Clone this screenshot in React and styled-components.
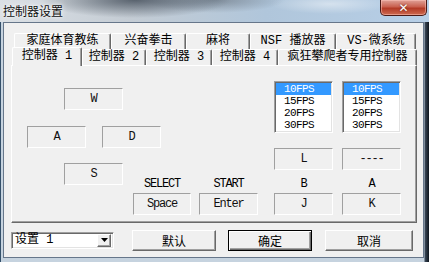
import React from "react";
import styled, { createGlobalStyle } from "styled-components";

const GlobalStyle = createGlobalStyle`
  html, body { margin: 0; padding: 0; width: 429px; height: 262px; overflow: hidden; }
  body { font-family: "Liberation Mono", "Noto Sans CJK SC", monospace; font-size: 12px; color: #000; }
  * { box-sizing: border-box; }
`;

const Window = styled.div`
  width: 429px;
  height: 262px;
  display: flex;
  flex-direction: column;
  background: #c3d1de;
`;

const TitleBar = styled.div`
  height: 22px;
  flex: none;
  display: flex;
  justify-content: space-between;
  align-items: flex-start;
  background:
    radial-gradient(ellipse 95px 18px at 135px 0px, rgba(62, 72, 84, 0.8), rgba(62, 72, 84, 0) 100%),
    radial-gradient(ellipse 70px 13px at 215px 0px, rgba(85, 96, 108, 0.55), rgba(85, 96, 108, 0) 100%),
    radial-gradient(ellipse 60px 10px at 330px 4px, rgba(255, 255, 255, 0.45), rgba(255, 255, 255, 0) 100%),
    linear-gradient(to right, #dbe0e5 0%, #c4ccd4 30%, #b0c6db 62%, #b7cfe7 100%);
`;

const Title = styled.div`
  padding-left: 3px;
  line-height: 22px;
  font-family: "Noto Sans CJK SC", sans-serif;
  font-size: 12px;
  color: #101010;
  text-shadow: 0 0 6px rgba(255, 255, 255, 0.95), 0 0 3px rgba(255, 255, 255, 0.8);
`;

const CloseButton = styled.div`
  width: 47px;
  height: 16px;
  margin-right: 2px;
  border: 1px solid #4a1a16;
  border-top: none;
  border-radius: 0 0 5px 5px;
  background: linear-gradient(to bottom, #e0a298 0%, #c9604f 45%, #b33a26 55%, #cd6a50 100%);
  box-shadow: inset 0 0 0 1px rgba(255, 200, 190, 0.5);
  display: flex;
  align-items: center;
  justify-content: center;
  color: #fff;
  font-family: "DejaVu Sans", sans-serif;
  font-weight: bold;
  font-size: 12px;
  line-height: 1;
  text-shadow: 0 0 2px #5a1a10;
`;

const BodyRow = styled.div`
  flex: 1;
  display: flex;
  padding: 0 5px 4px 3px;
  background: linear-gradient(
    to right,
    #34506a 0px,
    #34506a 1px,
    #c6d3df 1px,
    #c6d3df 424px,
    #3a4858 425px,
    #0e151d 429px
  );
`;

const Client = styled.div`
  flex: 1;
  border: 1px solid #66768a;
  background: #f0f0f0;
  display: flex;
  flex-direction: column;
`;

const TabArea = styled.div`
  margin: 10px 0 0 7px;
  width: 406px;
  display: flex;
  flex-direction: column;
`;

const TabRow = styled.div`
  height: 16px;
  display: flex;
  align-items: flex-end;
  padding-left: ${(p) => p.$indent}px;
`;

const Tab = styled.div`
  width: ${(p) => p.$w}px;
  height: ${(p) => (p.$active ? 19 : 16)}px;
  margin-bottom: ${(p) => (p.$active ? -1 : 0)}px;
  position: ${(p) => (p.$active ? "relative" : "static")};
  z-index: ${(p) => (p.$active ? 1 : "auto")};
  background: #f0f0f0;
  border-top: 1px solid #fff;
  border-left: 1px solid #fff;
  border-right: 1px solid #696969;
  border-radius: 2px 2px 0 0;
  box-shadow: inset -1px 0 0 #a0a0a0;
  text-align: center;
  line-height: 14px;
  padding-top: ${(p) => (p.$active ? 1 : 0)}px;
  white-space: nowrap;
  font-size: 12px;
`;

const Panel = styled.div`
  width: 406px;
  height: 158px;
  background: #f0f0f0;
  border-top: 1px solid #fff;
  border-left: 1px solid #fff;
  border-right: 1px solid #696969;
  border-bottom: 1px solid #696969;
  box-shadow: inset -1px -1px 0 #a0a0a0;
  padding: 15px 0 0 15px;
  display: grid;
  grid-template-columns:
    [a] 37px [w] 22px [ae] 16px [d] 21px [we] 10px [sp] 28px [de] 30px [spe] 8px
    [en] 59px [ene] 16px [l] 59px [le] 9px [r] 59px [re];
  grid-template-rows:
    [lt] 7px [wt] 22px [wb] 16px [at] 7px [lb] 15px [ab] 15px [st] 7px [lbot] 9px
    [labt] 6px [sb] 8px [bt] 22px [bb];
`;

const latin = `
  font-family: "Liberation Mono", monospace;
  font-size: 12px;
  letter-spacing: -1.2px;
`;

const KeyBox = styled.div`
  grid-column: ${(p) => p.$col};
  grid-row: ${(p) => p.$row};
  border-top: 1px solid #a0a0a0;
  border-left: 1px solid #a0a0a0;
  border-right: 1px solid #fff;
  border-bottom: 1px solid #fff;
  display: flex;
  align-items: center;
  justify-content: center;
  ${latin}
  color: #111;
`;

const KeyLabel = styled.div`
  grid-column: ${(p) => p.$col};
  grid-row: labt / bt;
  text-align: center;
  line-height: 11px;
  ${latin}
`;

const ListBox = styled.div`
  grid-column: ${(p) => p.$col};
  grid-row: lt / lb;
  background: #fff;
  border: 1px solid;
  border-color: #a0a0a0 #fff #fff #a0a0a0;
  box-shadow: inset 1px 1px 0 #696969, inset -1px -1px 0 #e3e3e3;
  padding: 1px;
  display: flex;
  flex-direction: column;
`;

const ListItem = styled.div`
  height: 12px;
  line-height: 12px;
  padding-left: 8px;
  font-family: "Liberation Mono", monospace;
  font-size: 11px;
  letter-spacing: -0.6px;
  background: ${(p) => (p.$selected ? "#3399ff" : "transparent")};
  color: ${(p) => (p.$selected ? "#fff" : "#000")};
`;

const BottomBar = styled.div`
  flex: 1;
  display: flex;
  align-items: center;
  padding-left: 7px;
`;

const Combo = styled.div`
  width: 103px;
  height: 17px;
  background: #fff;
  border: 1px solid;
  border-color: #a0a0a0 #fff #fff #a0a0a0;
  box-shadow: inset 1px 1px 0 #696969, inset -1px -1px 0 #e3e3e3;
  padding: 2px;
  display: flex;
  align-items: center;
  justify-content: space-between;
`;

const ComboText = styled.span`
  padding-left: 1px;
  font-size: 12px;
  line-height: 13px;
`;

const ComboArrow = styled.div`
  width: 14px;
  height: 13px;
  background: #f0f0f0;
  border: 1px solid;
  border-color: #fff #696969 #696969 #fff;
  box-shadow: inset -1px -1px 0 #a0a0a0;
  display: flex;
  align-items: center;
  justify-content: center;
`;

const Button = styled.div`
  width: ${(p) => p.$w}px;
  height: 21px;
  margin-left: ${(p) => p.$ml}px;
  background: #f0f0f0;
  border: 1px solid;
  border-color: ${(p) => (p.$default ? "#000" : "#fff #696969 #696969 #fff")};
  box-shadow: ${(p) =>
    p.$default
      ? "inset 1px 1px 0 #fff, inset -1px -1px 0 #696969, inset -2px -2px 0 #a0a0a0"
      : "inset -1px -1px 0 #a0a0a0"};
  display: flex;
  align-items: center;
  justify-content: center;
  font-family: "Noto Sans CJK SC", sans-serif;
  font-size: 12px;
`;

const backTabs = [
  { label: "家庭体育教练", w: 97 },
  { label: "兴奋拳击", w: 75 },
  { label: "麻将", w: 64 },
  { label: "NSF 播放器", w: 86 },
  { label: "VS-微系统", w: 80 },
];

const frontTabs = [
  { label: "控制器 1", w: 70, active: true },
  { label: "控制器 2", w: 64 },
  { label: "控制器 3", w: 66 },
  { label: "控制器 4", w: 66 },
  { label: "疯狂攀爬者专用控制器", w: 139 },
];

const fps = ["10FPS", "15FPS", "20FPS", "30FPS"];

export default function App() {
  return (
    <>
      <GlobalStyle />
      <Window>
        <TitleBar>
          <Title>控制器设置</Title>
          <CloseButton>✕</CloseButton>
        </TitleBar>
        <BodyRow>
          <Client>
            <TabArea>
              <TabRow $indent={3}>
                {backTabs.map((t) => (
                  <Tab key={t.label} $w={t.w}>
                    {t.label}
                  </Tab>
                ))}
              </TabRow>
              <TabRow $indent={1}>
                {frontTabs.map((t) => (
                  <Tab key={t.label} $w={t.w} $active={t.active}>
                    {t.label}
                  </Tab>
                ))}
              </TabRow>
              <Panel>
                <KeyBox $col="w / we" $row="wt / wb">W</KeyBox>
                <KeyBox $col="a / ae" $row="at / ab">A</KeyBox>
                <KeyBox $col="d / de" $row="at / ab">D</KeyBox>
                <KeyBox $col="w / we" $row="st / sb">S</KeyBox>

                <ListBox $col="l / le">
                  {fps.map((f, i) => (
                    <ListItem key={f} $selected={i === 0}>{f}</ListItem>
                  ))}
                </ListBox>
                <ListBox $col="r / re">
                  {fps.map((f, i) => (
                    <ListItem key={f} $selected={i === 0}>{f}</ListItem>
                  ))}
                </ListBox>

                <KeyBox $col="l / le" $row="ab / lbot">L</KeyBox>
                <KeyBox $col="r / re" $row="ab / lbot">----</KeyBox>

                <KeyLabel $col="sp / spe">SELECT</KeyLabel>
                <KeyLabel $col="en / ene">START</KeyLabel>
                <KeyLabel $col="l / le">B</KeyLabel>
                <KeyLabel $col="r / re">A</KeyLabel>

                <KeyBox $col="sp / spe" $row="bt / bb">Space</KeyBox>
                <KeyBox $col="en / ene" $row="bt / bb">Enter</KeyBox>
                <KeyBox $col="l / le" $row="bt / bb">J</KeyBox>
                <KeyBox $col="r / re" $row="bt / bb">K</KeyBox>
              </Panel>
            </TabArea>
            <BottomBar>
              <Combo>
                <ComboText>设置 1</ComboText>
                <ComboArrow>
                  <svg width="7" height="4" viewBox="0 0 7 4">
                    <path d="M0 0H7L3.5 4Z" fill="#000" />
                  </svg>
                </ComboArrow>
              </Combo>
              <Button $w={84} $ml={18}>默认</Button>
              <Button $w={84} $ml={12} $default>确定</Button>
              <Button $w={88} $ml={13}>取消</Button>
            </BottomBar>
          </Client>
        </BodyRow>
      </Window>
    </>
  );
}
